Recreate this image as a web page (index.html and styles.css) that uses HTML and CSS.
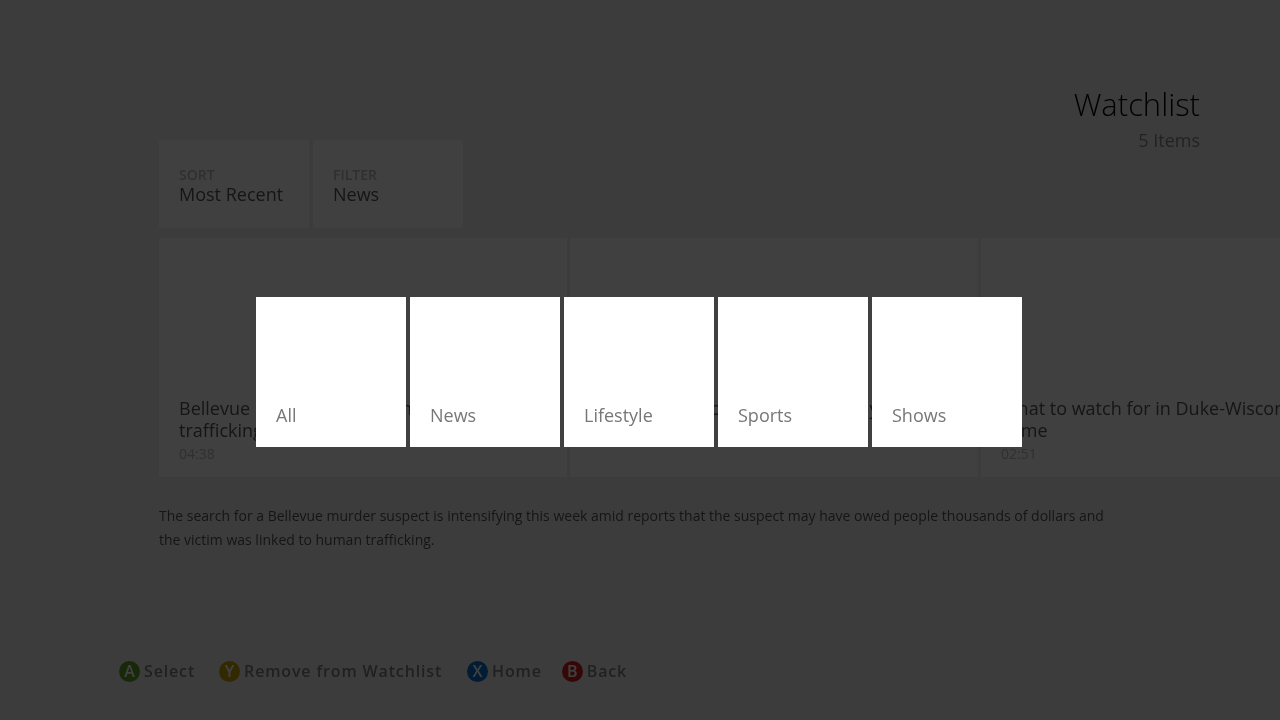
FILE: index.html
```html
<!DOCTYPE html>
<html lang="en">
<head>
<meta charset="utf-8">
<title>Watchlist</title>
<link rel="stylesheet" href="styles.css">
</head>
<body>
<div class="page">
  <header class="head">
    <h1 class="title">Watchlist</h1>
    <div class="count">5 Items</div>
  </header>
  <div class="controls">
    <div class="control"><div class="label">SORT</div><div class="value">Most Recent</div></div>
    <div class="control"><div class="label">FILTER</div><div class="value">News</div></div>
  </div>
  <div class="cards">
    <div class="card"><div class="card-title">Bellevue murder suspect linked to human trafficking</div><div class="time">04:38</div></div>
    <div class="card"><div class="card-title">Police search for suspect in deadly shooting</div><div class="time">01:30</div></div>
    <div class="card"><div class="card-title">What to watch for in Duke-Wisconsin title game</div><div class="time">02:51</div></div>
  </div>
  <p class="desc">The search for a Bellevue murder suspect is intensifying this week amid reports that the suspect may have owed people thousands of dollars and the victim was linked to human trafficking.</p>
  <footer class="hints">
    <div class="hint h-select"><span class="btn btn-a">A</span>Select</div>
    <div class="hint h-remove"><span class="btn btn-y">Y</span>Remove from Watchlist</div>
    <div class="hint h-home"><span class="btn btn-x">X</span>Home</div>
    <div class="hint"><span class="btn btn-b">B</span>Back</div>
  </footer>
</div>
<div class="overlay">
  <div class="menu">
    <div class="tile">All</div>
    <div class="tile">News</div>
    <div class="tile">Lifestyle</div>
    <div class="tile">Sports</div>
    <div class="tile">Shows</div>
  </div>
</div>
</body>
</html>
```
FILE: styles.css
```css
* { box-sizing: border-box; }
html, body { margin: 0; height: 720px; overflow: hidden; }
body { font-family: "Open Sans", "Liberation Sans", sans-serif; background: #f0f0f0; color: #000; }
.page { width: 1280px; height: 720px; overflow: hidden; padding: 83px 80px 0 159px; display: flex; flex-direction: column; will-change: transform; }
.head { text-align: right; height: 57px; }
.title { margin: 0; font-size: 31px; line-height: 42px; font-weight: 300; color: #000; }
.count { font-size: 18px; line-height: 31px; color: #888; }
.controls { display: flex; gap: 4px; height: 88px; }
.control { width: 150px; padding: 27px 20px 0; background: #fff; }
.label { font-size: 14px; line-height: 15px; font-weight: 600; color: #bbb; }
.value { font-size: 18px; line-height: 24px; color: #555; }
.cards { display: flex; gap: 3px; margin-top: 10px; width: 1300px; flex: none; }
.card { flex: none; width: 408px; height: 239px; padding: 159px 20px 0; background: #fff; }
.card-title { font-size: 18px; line-height: 22px; color: #555; }
.time { font-size: 14px; line-height: 26px; color: #bbb; }
.desc { margin: 27px 0 0; width: 960px; font-size: 14px; line-height: 24px; color: #555; }
.hints { display: flex; margin: 108px 0 0 -40px; font-size: 16px; font-weight: 600; letter-spacing: .85px; color: #808080; line-height: 22px; }
.hint { display: flex; align-items: center; gap: 4px; }
.h-select { margin-right: 24px; }
.h-remove { margin-right: 25px; }
.h-home { margin-right: 20px; }
.btn { width: 21px; height: 21px; border-radius: 50%; display: flex; align-items: center; justify-content: center; font-size: 16px; font-weight: 600; letter-spacing: 0; color: #fff; }
.btn-a { background: #5da423; }
.btn-y { background: #c9a200; }
.btn-x { background: #0a6fd0; }
.btn-b { background: #d81e1e; }
.overlay { position: absolute; inset: 0; background: rgba(0,0,0,.75); display: flex; align-items: flex-start; padding: 297px 0 0 256px; will-change: transform; }
.menu { display: flex; gap: 4px; }
.tile { width: 150px; height: 150px; background: #fff; padding: 106px 20px 0; font-size: 18px; line-height: 24px; color: #777; }
```
